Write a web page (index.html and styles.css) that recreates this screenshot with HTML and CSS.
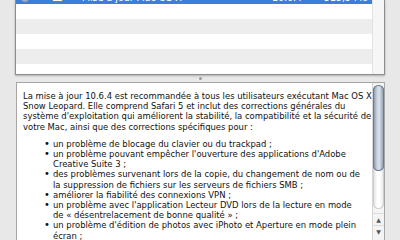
FILE: index.html
```html
<!DOCTYPE html>
<html lang="fr">
<head>
  <meta charset="UTF-8">
  <title>Mise à jour de logiciels</title>
  <link rel="stylesheet" href="styles.css">
</head>
<body>
  <div class="window">
    <div class="update-list">
      <div class="rows">
        <div class="row selected">
          <span class="check"></span>
          <span class="pkg-icon"></span>
          <span class="name">Mise à jour Mac OS X</span>
          <span class="version">10.6.4</span>
          <span class="size">515,9 Mo</span>
        </div>
        <div class="row"></div>
        <div class="row"></div>
        <div class="row"></div>
        <div class="row"></div>
        <div class="row"></div>
      </div>
      <div class="gutter"></div>
    </div>

    <div class="splitter"><span class="dimple"></span></div>

    <div class="notes">
      <div class="notes-text">
        <p>La mise à jour 10.6.4 est recommandée à tous les utilisateurs exécutant Mac OS X Snow Leopard. Elle comprend Safari 5 et inclut des corrections générales du système d'exploitation qui améliorent la stabilité, la compatibilité et la sécurité de votre Mac, ainsi que des corrections spécifiques pour :</p>
        <ul>
          <li>un problème de blocage du clavier ou du trackpad ;</li>
          <li>un problème pouvant empêcher l'ouverture des applications d'Adobe Creative Suite 3 ;</li>
          <li>des problèmes survenant lors de la copie, du changement de nom ou de la suppression de fichiers sur les serveurs de fichiers SMB ;</li>
          <li>améliorer la fiabilité des connexions VPN ;</li>
          <li>un problème avec l'application Lecteur DVD lors de la lecture en mode de « désentrelacement de bonne qualité » ;</li>
          <li>un problème d'édition de photos avec iPhoto et Aperture en mode plein écran ;</li>
        </ul>
      </div>
      <div class="scrollbar">
        <div class="track">
          <div class="thumb"></div>
        </div>
        <div class="arrow up">&#9650;</div>
        <div class="arrow down">&#9660;</div>
      </div>
    </div>
  </div>
</body>
</html>
```

FILE: styles.css
```css
body {
  margin: 0;
  background-color: #e8e8e8;
  font-family: 'DejaVu Sans', sans-serif;
  color: #000;
  overflow: hidden;
}

.window {
  width: 370px;
  height: 240px;
  margin: 0 15px;
  display: flex;
  flex-direction: column;
}

.update-list {
  height: 75px;
  display: flex;
  border: 1px solid #8c8c8c;
  border-top: none;
  box-sizing: border-box;
  background-color: #fff;
  box-shadow: 0 1px 2px rgba(0, 0, 0, 0.25);
}

.rows {
  flex: 1;
  overflow: hidden;
}

.row {
  height: 15px;
  background-color: #ededed;
  display: flex;
  align-items: center;
  font-family: 'DejaVu Sans Condensed', 'DejaVu Sans', sans-serif;
  font-stretch: condensed;
  font-size: 10.5px;
}

.row:nth-child(even) {
  background-color: #fff;
}

.row.selected {
  margin-top: -11px;
  background-color: #3b7fdc;
  color: #fff;
  align-items: flex-end;
  line-height: 13px;
}

.check {
  width: 8px;
  height: 8px;
  margin-left: 5px;
  margin-bottom: 2px;
  border-radius: 50%;
  background-color: #9aa9bd;
}

.pkg-icon {
  width: 9px;
  height: 11px;
  margin-left: 23px;
  margin-bottom: 2px;
  background-color: #f4f4f4;
  border: 1px solid #6f7f95;
}

.name {
  margin-left: 19px;
  width: 190px;
}

.version {
  width: 52px;
}

.size {
  flex: 1;
  text-align: right;
  padding-right: 4px;
}

.gutter {
  width: 11px;
  background-color: #f6f6f6;
  border-left: 1px solid #e2e2e2;
}

.splitter {
  height: 7px;
  display: flex;
  justify-content: center;
  align-items: center;
}

.dimple {
  width: 3px;
  height: 3px;
  border-radius: 50%;
  background-color: #9a9a9a;
  margin-left: 1px;
}

.notes {
  flex: 1;
  min-height: 0;
  display: flex;
  background-color: #fff;
  border: 1px solid #a6a6a6;
  border-bottom: none;
  margin-left: 1px;
}

.notes-text {
  flex: 1;
  overflow: hidden;
  padding: 8px 0 0 6px;
  font-family: 'DejaVu Sans Condensed', 'DejaVu Sans', sans-serif;
  font-stretch: condensed;
  font-size: 9.4px;
  line-height: 10.2px;
  color: #111;
}

.notes-text p {
  margin: 0 0 7px 0;
}

.notes-text ul {
  margin: 0;
  padding: 0 10px 0 30px;
  list-style: none;
}

.notes-text li::before {
  content: '\2022';
  display: inline-block;
  width: 9px;
  margin-left: -9px;
  font-size: 11px;
}

.scrollbar {
  width: 11px;
  display: flex;
  flex-direction: column;
  border-left: 1px solid #d6d6d6;
  background-color: #f4f4f4;
}

.track {
  height: 124px;
  margin-top: 2px;
  border-radius: 6px;
  background: linear-gradient(to right, #dcdcdc, #fff 40%, #fff 60%, #e4e4e4);
  box-shadow: inset 0 0 0 1px #cfcfcf;
}

.thumb {
  height: 86px;
  border-radius: 6px;
  background: linear-gradient(to right, #7d8a9c, #c7d0dc 35%, #dde3ea 55%, #a3afbe 85%, #7f8c9d);
  box-shadow: inset 0 0 0 1px #6e7b8e;
}

.arrow {
  height: 11px;
  font-size: 6px;
  line-height: 11px;
  text-align: center;
  color: #555;
  border-top: 1px solid #dcdcdc;
}

.arrow.up {
  margin-top: 4px;
}
```
